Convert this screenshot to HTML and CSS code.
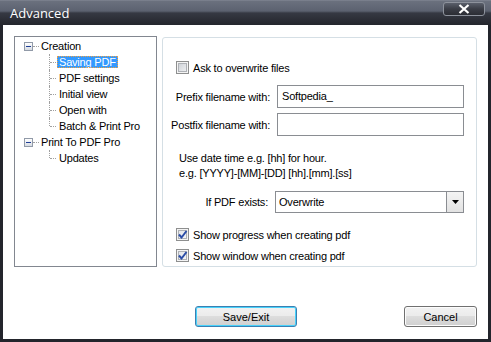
FILE: index.html
```html
<!DOCTYPE html>
<html lang="en">
<head>
<meta charset="UTF-8">
<title>Advanced</title>
<link rel="stylesheet" href="styles.css">
</head>
<body>
<div class="window">
    <div class="titlebar">
        <span class="title">Advanced</span>
        <button class="close-button" aria-label="Close">
            <svg width="12" height="10" viewBox="0 0 12 10"><path d="M1.5 1 L10.5 9 M10.5 1 L1.5 9" stroke="#ffffff" stroke-width="2.2"/></svg>
        </button>
    </div>
    <div class="client">
        <div class="main">
            <div class="tree">
                <ul class="tree-root">
                    <li>
                        <div class="node"><span class="expander"></span><span class="stub"></span><span class="label">Creation</span></div>
                        <ul class="children">
                            <li><span class="label selected">Saving PDF</span></li>
                            <li><span class="label">PDF settings</span></li>
                            <li><span class="label">Initial view</span></li>
                            <li><span class="label">Open with</span></li>
                            <li><span class="label">Batch &amp; Print Pro</span></li>
                        </ul>
                    </li>
                    <li>
                        <div class="node"><span class="expander"></span><span class="stub"></span><span class="label">Print To PDF Pro</span></div>
                        <ul class="children">
                            <li><span class="label">Updates</span></li>
                        </ul>
                    </li>
                </ul>
            </div>
            <div class="panel">
                <label class="check-row first">
                    <span class="check"></span>
                    <span>Ask to overwrite files</span>
                </label>
                <div class="field-row prefix">
                    <span class="field-label">Prefix filename with:</span>
                    <div class="text-box">Softpedia_</div>
                </div>
                <div class="field-row postfix">
                    <span class="field-label">Postfix filename with:</span>
                    <div class="text-box"></div>
                </div>
                <div class="hint">
                    Use date time e.g. [hh] for hour.<br>
                    e.g. [YYYY]-[MM]-[DD] [hh].[mm].[ss]
                </div>
                <div class="field-row exists">
                    <span class="field-label">If PDF exists:</span>
                    <div class="select-box">
                        <span class="select-value">Overwrite</span>
                        <span class="select-arrow">
                            <svg width="7" height="4" viewBox="0 0 7 4"><path d="M0 0 H7 L3.5 4 Z" fill="#000"/></svg>
                        </span>
                    </div>
                </div>
                <label class="check-row progress">
                    <span class="check checked">
                        <svg width="11" height="11" viewBox="0 0 11 11"><path d="M2 5.5 L4.5 8.5 L9.5 2" fill="none" stroke="#2a4ca6" stroke-width="2"/></svg>
                    </span>
                    <span>Show progress when creating pdf</span>
                </label>
                <label class="check-row window-check">
                    <span class="check checked">
                        <svg width="11" height="11" viewBox="0 0 11 11"><path d="M2 5.5 L4.5 8.5 L9.5 2" fill="none" stroke="#2a4ca6" stroke-width="2"/></svg>
                    </span>
                    <span>Show window when creating pdf</span>
                </label>
            </div>
        </div>
        <div class="buttons">
            <button class="btn default">Save/Exit</button>
            <button class="btn cancel">Cancel</button>
        </div>
    </div>
</div>
</body>
</html>
```

FILE: styles.css
```css
body {
    margin: 0;
    font-family: "Liberation Sans", Arial, sans-serif;
    font-size: 11px;
    letter-spacing: -0.2px;
    color: #000000;
    background-color: #ffffff;
}
.window {
    width: 491px;
    height: 342px;
    display: flex;
    flex-direction: column;
}
.titlebar {
    height: 25px;
    flex: none;
    display: flex;
    justify-content: space-between;
    align-items: flex-start;
    background: linear-gradient(to bottom, #878c99 0, #6b717e 1px, #5c6270 11px, #363943 13px, #25272e 24px);
}
.title {
    color: #ffffff;
    font-family: "Open Sans", sans-serif;
    font-size: 13px;
    letter-spacing: 0;
    line-height: 18px;
    padding: 4px 0 0 10px;
}
.close-button {
    width: 42px;
    height: 14px;
    margin: 2px 6px 0 0;
    padding: 0;
    display: flex;
    justify-content: center;
    align-items: center;
    border: 1px solid #8d929c;
    border-radius: 3px;
    background: linear-gradient(to bottom, #5a5f6b, #3a3d46 50%, #2b2d34);
}
.client {
    flex: 1;
    background-color: #ffffff;
    border-left: 3px solid #23252c;
    border-right: 3px solid #23252c;
    border-bottom: 3px solid #23252c;
    padding: 11px 11px 0 11px;
}
.main {
    display: flex;
    gap: 5px;
    height: 231px;
}
.tree {
    width: 143px;
    box-sizing: border-box;
    border: 1px solid #828790;
    padding: 1px 0 0 9px;
}
.tree ul {
    list-style: none;
    margin: 0;
    padding: 0;
}
.node {
    display: flex;
    align-items: center;
    height: 16px;
}
.expander {
    width: 9px;
    height: 9px;
    box-sizing: border-box;
    border: 1px solid #919aa8;
    background:
        linear-gradient(#1e3e96, #1e3e96) center / 5px 1px no-repeat,
        linear-gradient(to bottom, #ffffff, #d6dbe2);
}
.stub {
    width: 6px;
    border-top: 1px dotted #a0a0a0;
}
.label {
    padding: 0 2px;
    line-height: 12px;
    white-space: nowrap;
}
.label.selected {
    background-color: #3399ff;
    color: #ffffff;
    outline: 1px dotted #f0a040;
    outline-offset: -1px;
}
.children li {
    position: relative;
    height: 16px;
    display: flex;
    align-items: center;
    padding-left: 33px;
}
.children li::before {
    content: "";
    position: absolute;
    left: 25px;
    top: 0;
    bottom: 0;
    border-left: 1px dotted #a0a0a0;
}
.children li:last-child::before {
    bottom: 8px;
}
.children li::after {
    content: "";
    position: absolute;
    left: 26px;
    top: 8px;
    width: 6px;
    border-top: 1px dotted #a0a0a0;
}
.panel {
    width: 315px;
    height: 230px;
    margin-top: 1px;
    box-sizing: border-box;
    border: 1px solid #d5dfe5;
    border-radius: 3px;
    padding: 23px 0 0 9px;
    display: flex;
    flex-direction: column;
}
.check-row {
    display: flex;
    align-items: center;
    gap: 4px;
    height: 13px;
    margin-left: 4px;
}
.check {
    width: 13px;
    height: 13px;
    box-sizing: border-box;
    flex: none;
    border: 1px solid #8e8f8f;
    background: linear-gradient(135deg, #c9cdd3, #f4f5f6);
    box-shadow: inset 0 0 0 1px #f4f4f4, inset 0 0 0 2px #aeb1b6;
    display: flex;
    align-items: center;
    justify-content: center;
}
.check.checked {
    background: linear-gradient(135deg, #dfe2e7, #f7f8f9);
}
.field-row {
    display: flex;
    align-items: center;
    gap: 7px;
}
.field-label {
    width: 98px;
    flex: none;
    display: flex;
    justify-content: flex-end;
    white-space: nowrap;
}
.prefix {
    margin-top: 11px;
}
.postfix {
    margin-top: 5px;
}
.text-box {
    width: 187px;
    height: 23px;
    box-sizing: border-box;
    border: 1px solid #8a8d92;
    padding: 0 4px;
    line-height: 21px;
}
.hint {
    margin: 15px 0 0 7px;
    line-height: 15px;
}
.exists {
    margin-top: 10px;
}
.exists .field-label {
    width: 96px;
}
.select-box {
    width: 189px;
    height: 22px;
    box-sizing: border-box;
    border: 1px solid #8a8d92;
    display: flex;
}
.select-value {
    flex: 1;
    padding-left: 3px;
    line-height: 20px;
}
.select-arrow {
    width: 16px;
    border-left: 1px solid #8a8d92;
    background: linear-gradient(to bottom, #f4f4f4, #e2e2e2);
    display: flex;
    align-items: center;
    justify-content: center;
}
.progress {
    margin-top: 15px;
}
.window-check {
    margin-top: 8px;
}
.buttons {
    display: flex;
    justify-content: space-between;
    margin-top: 39px;
    padding-left: 181px;
}
.btn {
    height: 21px;
    padding: 0;
    font-family: "Liberation Sans", Arial, sans-serif;
    font-size: 11px;
    color: #000000;
    border: 1px solid #707070;
    border-radius: 3px;
    background: linear-gradient(to bottom, #f2f2f2 0, #ebebeb 50%, #dddddd 50%, #cfcfcf 100%);
    box-shadow: inset 0 0 0 1px #fcfcfc;
}
.btn.default {
    width: 102px;
    border-color: #3c7fb1;
    box-shadow: inset 0 0 0 1px #48d2fb;
}
.btn.cancel {
    width: 73px;
}
```
